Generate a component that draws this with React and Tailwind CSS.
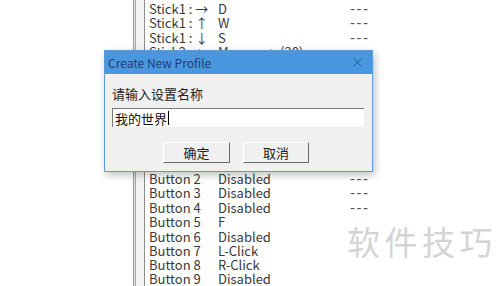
import { X } from 'lucide-react'

const top = [
  ['Stick1 : →', 'D', '---'],
  ['Stick1 : ↑', 'W', '---'],
  ['Stick1 : ↓', 'S', '---'],
  ['Stick2 : ←', 'Mouse : ←(20)', '---'],
]

const bottom = [
  ['Button 2', 'Disabled', '---'],
  ['Button 3', 'Disabled', '---'],
  ['Button 4', 'Disabled', '---'],
  ['Button 5', 'F', ''],
  ['Button 6', 'Disabled', ''],
  ['Button 7', 'L-Click', ''],
  ['Button 8', 'R-Click', ''],
  ['Button 9', 'Disabled', ''],
]

function Row({ name, value, dash }) {
  return (
    <div className="flex h-[14.5px] items-center text-[13px] leading-none text-[#3a3a3a]">
      <span className="w-[69px] whitespace-nowrap">{name}</span>
      <span className="flex-1 whitespace-nowrap">{value}</span>
      <span className="w-[22px] whitespace-nowrap font-['Liberation_Sans'] text-[15px] tracking-[1.5px] text-[#555]">{dash}</span>
    </div>
  )
}

export default function App() {
  return (
    <div
      className="relative h-[286px] w-[500px] overflow-hidden bg-white"
      style={{ fontFamily: '"Noto Sans CJK SC", "Noto Sans", sans-serif' }}
    >
      <div className="flex h-full">
        <div className="w-[133px]" />
        <div className="w-[1px] bg-[#9a9a9a]" />
        <div className="w-[1px] bg-[#e4e4e4]" />
        <div className="w-[1px] bg-[#a8a8a8]" />
        <div className="w-[8px] bg-[#f4f4f4]" />
        <div className="w-[1px] bg-[#8c8c8c]" />
        <div className="flex w-[227px] flex-col pl-[4px] pt-[1px]">
          {top.map((r) => (
            <Row key={r[0]} name={r[0]} value={r[1]} dash={r[2]} />
          ))}
          <div className="h-[114px]" />
          {bottom.map((r) => (
            <Row key={r[0]} name={r[0]} value={r[1]} dash={r[2]} />
          ))}
        </div>
      </div>

      <span className="absolute left-[347px] top-[225px] whitespace-nowrap text-[33px] leading-none tracking-[4.5px] text-[#d4d4d4]">
        软件技巧
      </span>

      <div className="absolute left-[104px] top-[50px] flex h-[122px] w-[269px] flex-col border border-[#5a9ad8] bg-[#f0f0f0] shadow-[2px_3px_8px_rgba(0,0,0,0.25)]">
        <div className="flex h-[23px] items-center justify-between bg-[#4a97e0] pl-[3px] pr-[7px]">
          <span className="text-[12px] text-[#1d3f72]">Create New Profile</span>
          <X size={15} strokeWidth={1.2} className="text-[#1d3f72]" />
        </div>
        <div className="flex flex-col px-[7px] pt-[13px]">
          <span className="text-[13px] leading-none text-[#222]">请输入设置名称</span>
          <div className="mt-[8px] flex h-[19px] w-[252px] items-center border-t border-l border-[#7a7a7a] border-b-[#e8e8e8] border-r-[#e8e8e8] bg-white px-[2px]">
            <span className="text-[13px] leading-none text-[#111]">我的世界</span>
            <span className="ml-[1px] h-[14px] w-[1px] bg-black" />
          </div>
          <div className="mt-[15px] flex gap-[13px] pl-[51px]">
            <div className="flex h-[21px] w-[67px] items-center justify-center border border-t-white border-l-white border-b-[#6a6a6a] border-r-[#6a6a6a] bg-[#f0f0f0] text-[13px] text-[#222]">确定</div>
            <div className="flex h-[21px] w-[66px] items-center justify-center border border-t-white border-l-white border-b-[#6a6a6a] border-r-[#6a6a6a] bg-[#f0f0f0] text-[13px] text-[#222]">取消</div>
          </div>
        </div>
      </div>
    </div>
  )
}
